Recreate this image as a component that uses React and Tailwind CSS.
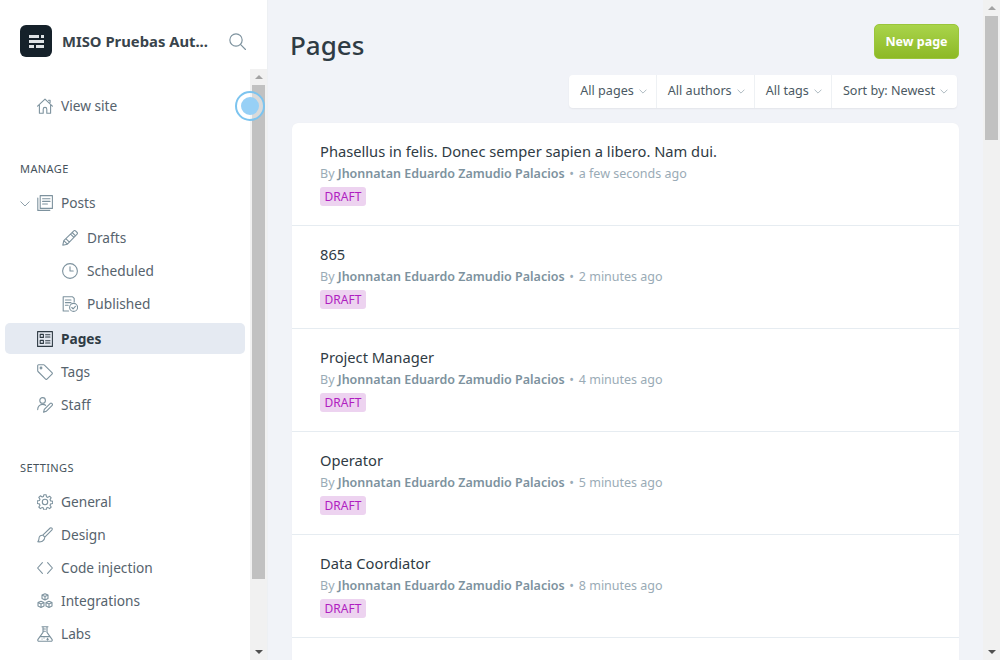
import React from 'react';

// shared props for the thin outline icons of the sidebar
const line = { fill: 'none', stroke: 'currentColor', strokeWidth: 1.1, strokeLinecap: 'round', strokeLinejoin: 'round' };

const Icon = ({ children, className = 'w-4 h-4' }) => (
  <svg viewBox="0 0 16 16" className={`${className} text-[#7d929e] shrink-0`} {...line}>
    {children}
  </svg>
);

const HomeIcon = () => (
  <Icon>
    <path d="M.6 8.2 8 1.2l7.4 7M2.4 7v8.2h3.8v-4a1.8 1.8 0 0 1 3.6 0v4h3.8V7M11.5 2.2h1.6v2.2" />
  </Icon>
);
const PostsIcon = () => (
  <Icon>
    <path d="M3.2.6h12.200v12.800H3.200zM.8 3v12.400h12M5.600 3.800h7.400M5.600 6.400h7.400M5.600 9h4.800" />
  </Icon>
);
const PencilIcon = () => (
  <Icon>
    <path d="M.8 15.200l1-4.600L11.800.9a1.200 1.200 0 0 1 1.700 0l1.600 1.600a1.200 1.200 0 0 1 0 1.700L5.400 14.200zM1.800 10.600l3.600 3.600M10.200 2.500l3.300 3.300M8.600 4.100l3.300 3.300M3.800 8.600l3.600 3.600" />
  </Icon>
);
const ClockIcon = () => (
  <Icon>
    <circle cx="8" cy="8" r="7.400" />
    <path d="M8 3.800V8h3.200" />
  </Icon>
);
const PublishedIcon = () => (
  <Icon>
    <path d="M6.600 15H1.200V.8h9.400l1.600 1.600v3.600M3.400 4h5.600M3.400 6.600h5.600M3.400 9.200h2.800" />
    <circle cx="11.600" cy="11.400" r="4" />
    <path d="m9.800 11.500 1.300 1.300 2.300-2.500" />
  </Icon>
);
const PagesIcon = () => (
  <svg viewBox="0 0 16 16" className="w-4 h-4 text-[#2f3b44] shrink-0" {...line}>
    <path d="M.6.6h14.800v14.800H.6zM3.200 3.400h3.200v3H3.200zM3.200 9.400h3.200v3H3.200zM8.600 3.800h4.400M8.600 6h4.400M8.600 9.800h4.400M8.600 12h4.400" />
  </svg>
);
const TagIcon = () => (
  <Icon>
    <path d="M.7 1.600v5.200a1 1 0 0 0 .3.700l7.600 7.600a1 1 0 0 0 1.400 0l5-5a1 1 0 0 0 0-1.400L7.400 1.100a1 1 0 0 0-.7-.3H1.500a.8.800 0 0 0-.8.800z" />
    <circle cx="4" cy="4" r=".9" />
  </Icon>
);
const StaffIcon = () => (
  <Icon>
    <circle cx="5.600" cy="3.400" r="2.800" />
    <path d="M.7 12.600c0-3 2-5.200 4.900-5.200 1.200 0 2.200.3 3 .9M6.600 15.200l.7-2.800 6-6a1 1 0 0 1 1.400 0l.5.5a1 1 0 0 1 0 1.400l-6 6z" />
  </Icon>
);
const GearIcon = () => (
  <Icon>
    <circle cx="8" cy="8" r="2.700" />
    <path d="M6.900.7h2.200l.4 2.100 1.300.6 1.800-1.200 1.600 1.600-1.200 1.800.6 1.300 2.100.4v2.200l-2.100.4-.6 1.300 1.200 1.800-1.600 1.600-1.800-1.200-1.300.6-.4 2.100H6.900l-.4-2.100-1.300-.6-1.800 1.200-1.600-1.600 1.200-1.800-.6-1.300-2.100-.4V6.900l2.100-.4.6-1.300-1.200-1.800 1.600-1.600 1.800 1.200 1.300-.6z" />
  </Icon>
);
const BrushIcon = () => (
  <Icon>
    <path d="M5.800 8.200 13.200 1a1.300 1.300 0 0 1 1.800 1.800L7.800 10.200zM5.800 8.200c-2.600-.2-3.800 1.400-3.800 3.200 0 1.300-.4 2.400-1.200 3.400 3 .4 6.800-.6 7-4.600" />
  </Icon>
);
const CodeIcon = () => (
  <Icon>
    <path d="M5.400 2.600.6 8l4.800 5.400M10.600 2.600 15.400 8l-4.800 5.400" />
  </Icon>
);
const IntegrationsIcon = () => (
  <Icon>
    <path d="M8 .7l3 1.400v3.400L8 6.900 5 5.500V2.100zM5 2.100l3 1.400 3-1.400M8 3.500v3.400" />
    <path d="M4 8.200l3 1.400V13l-3 1.500L1 13V9.600zM1 9.600 4 11l3-1.400M4 11v3.500" />
    <path d="M12 8.200l3 1.400V13l-3 1.500L9 13V9.600zM9 9.600l3 1.400 3-1.400M12 11v3.500" />
  </Icon>
);
const FlaskIcon = () => (
  <Icon>
    <path d="M5 .8h6M6 .8v5.600L1 13.400a1.200 1.200 0 0 0 1 1.900h12a1.200 1.200 0 0 0 1-1.900L10 6.400V.8M6 3h2.400M6 5.200h2.400M3 10.600h10M10.600 12.400v1.600M9.800 13.200h1.600M5 13h.1M7 12h.1" />
  </Icon>
);

const Chevron = () => (
  <svg viewBox="0 0 10 6" className="w-[8px] h-[5px] text-[#9aa9b3] shrink-0" fill="none" stroke="currentColor" strokeWidth="1">
    <path d="M.7.7 5 5 9.300.7" />
  </svg>
);

const NavItem = ({ icon, label, sub, active, className = '' }) => (
  <div
    className={`flex items-center h-[31px] rounded-[5px] mr-[5px] ml-[5px] ${sub ? 'pl-[57px]' : 'pl-[32px]'} ${active ? 'bg-[#e5eaf2] font-bold text-[#2f3b44]' : 'text-[#56636d]'} ${className}`}
  >
    {icon}
    <span className={`pt-[2px] ${sub ? 'ml-[9px]' : 'ml-[8px]'}`}>{label}</span>
  </div>
);

const Heading = ({ children, className = '' }) => (
  <div className={`pl-[20px] text-[11px] leading-[16px] tracking-[0.4px] text-[#45525b] ${className}`}>{children}</div>
);

// classic windows scrollbar, the thumb size and offset come in as classes
const Scrollbar = ({ thumbClass }) => (
  <div className="w-[17px] shrink-0 bg-[#f1f1f1] flex flex-col items-center">
    <div className="h-[16px] w-full flex items-center justify-center">
      <div className="w-0 h-0 border-x-[4px] border-x-transparent border-b-[4px] border-b-[#a3a3a3]" />
    </div>
    <div className={`w-[13px] bg-[#c1c1c1] ${thumbClass}`} />
    <div className="flex-1" />
    <div className="h-[17px] w-full flex items-center justify-center">
      <div className="w-0 h-0 border-x-[4px] border-x-transparent border-t-[4px] border-t-[#505050]" />
    </div>
  </div>
);

const Sidebar = () => (
  <aside className="w-[268px] h-full shrink-0 bg-white border-r border-[#edf0f3] flex flex-col text-[13.7px]">
    <header className="h-[69px] shrink-0 flex items-start pt-[25px] pl-[20px]">
      <div className="w-[32px] h-[32px] rounded-[6px] bg-[#15212a] flex flex-col items-center justify-center gap-[2px]">
        <div className="flex gap-[2px]">
          <div className="w-[10px] h-[3px] bg-[#dfe3e6]" />
          <div className="w-[3px] h-[3px] bg-[#dfe3e6]" />
        </div>
        <div className="w-[15px] h-[3px] bg-[#dfe3e6]" />
        <div className="flex gap-[2px]">
          <div className="w-[5px] h-[3px] bg-[#dfe3e6]" />
          <div className="w-[8px] h-[3px] bg-[#dfe3e6]" />
        </div>
      </div>
      <div className="ml-[10px] w-[150px] h-[32px] flex items-center text-[14.800px] font-bold text-[#39444c] whitespace-nowrap">
        MISO Pruebas Aut...
      </div>
      <svg viewBox="0 0 16 16" className="w-[17px] h-[17px] ml-[17px] mt-[8px] text-[#7d929e]" {...line}>
        <circle cx="6.600" cy="6.600" r="5.800" />
        <path d="m11 11 4.500 4.500" />
      </svg>
    </header>
    <div className="flex-1 min-h-0 flex relative">
      <nav className="flex-1 min-w-0 overflow-hidden">
        <NavItem icon={<HomeIcon />} label="View site" className="mt-[21px]" />
        <Heading className="mt-[40px]">MANAGE</Heading>
        <div className="relative mt-[10px]">
          <div className="absolute left-[20px] top-[14px]">
            <svg viewBox="0 0 10 6" className="w-[10px] h-[6px] text-[#8fa0aa]" fill="none" stroke="currentColor" strokeWidth="1">
              <path d="M.5.500 5 5 9.500.500" />
            </svg>
          </div>
          <NavItem icon={<PostsIcon />} label="Posts" />
        </div>
        <div className="pt-[3px]">
          <NavItem icon={<PencilIcon />} label="Drafts" sub className="h-[33px]" />
          <NavItem icon={<ClockIcon />} label="Scheduled" sub className="h-[33px]" />
          <NavItem icon={<PublishedIcon />} label="Published" sub className="h-[33px]" />
        </div>
        <NavItem icon={<PagesIcon />} label="Pages" active className="mt-[3px]" />
        <NavItem icon={<TagIcon />} label="Tags" className="mt-[2px]" />
        <NavItem icon={<StaffIcon />} label="Staff" className="mt-[2px]" />
        <Heading className="mt-[40px]">SETTINGS</Heading>
        <div className="mt-[10px] flex flex-col gap-[2px]">
          <NavItem icon={<GearIcon />} label="General" />
          <NavItem icon={<BrushIcon />} label="Design" />
          <NavItem icon={<CodeIcon />} label="Code injection" />
          <NavItem icon={<IntegrationsIcon />} label="Integrations" />
          <NavItem icon={<FlaskIcon />} label="Labs" />
        </div>
      </nav>
      <Scrollbar thumbClass="h-[494px]" />
      {/* the blue pulse dot that lies over the scrollbar */}
      <div className="absolute left-[235px] top-[22px] w-[30px] h-[30px] rounded-full border-2 border-[#7cc4ef] flex items-center justify-center bg-[#ffffff66]">
        <div className="w-[18px] h-[18px] rounded-full bg-[#97d0f6]" />
      </div>
    </div>
  </aside>
);

const filters = ['All pages', 'All authors', 'All tags', 'Sort by: Newest'];

const FilterBar = () => (
  <div className="flex h-[33px] bg-white rounded-[4px] shadow-[0_1px_2px_rgba(0,0,0,0.06)] text-[12.600px] text-[#4b5963] mr-[2px]">
    {filters.map((f, i) => (
      <div key={f} className={`flex items-center gap-[5px] pl-[11px] pr-[9px] whitespace-nowrap ${i > 0 ? 'border-l border-[#eef1f4]' : ''}`}>
        {f}
        <Chevron />
      </div>
    ))}
  </div>
);

const pages = [
  { title: 'Phasellus in felis. Donec semper sapien a libero. Nam dui.', when: 'a few seconds ago' },
  { title: '865', when: '2 minutes ago' },
  { title: 'Project Manager', when: '4 minutes ago' },
  { title: 'Operator', when: '5 minutes ago' },
  { title: 'Data Coordiator', when: '8 minutes ago' },
];

const PageRow = ({ page }) => (
  <div className="h-[103px] shrink-0 border-b border-[#e6ecf1] pl-[28px] pt-[18px]">
    <div className="text-[14.700px] leading-[21px] text-[#2f3b44]">{page.title}</div>
    <div className="text-[12.500px] leading-[18px] mt-[3px] text-[#9aabb6] whitespace-nowrap">
      By <span className="font-semibold text-[#7d929e]">Jhonnatan Eduardo Zamudio Palacios</span>
      <span className="mx-[1.500px]"> • </span>
      {page.when}
    </div>
    <div className="mt-[4px] w-[46px] h-[19px] rounded-[3px] bg-[#edd3f0] flex items-center justify-center text-[12px] text-[#b01ec0]">
      DRAFT
    </div>
  </div>
);

const Main = () => (
  <main className="flex-1 min-w-0 h-full bg-[#f1f3f8] flex">
    <div className="flex-1 min-w-0 overflow-hidden pl-[22px] pr-[24px]">
      <div className="flex justify-between items-start pt-[24px]">
        <h1 className="text-[26px] leading-[42px] font-medium text-[#2f3b44]">Pages</h1>
        <button className="w-[85px] h-[35px] pt-[2px] rounded-[5px] bg-gradient-to-b from-[#a9d44a] to-[#8db925] border border-[#9ac53a] text-white text-[12.500px] font-bold">
          New page
        </button>
      </div>
      <div className="flex justify-end mt-[9px]">
        <FilterBar />
      </div>
      <div className="ml-[2px] mt-[15px] bg-white rounded-t-[6px] h-[600px] flex flex-col shadow-[0_0_1px_rgba(0,0,0,0.05)]">
        {pages.map((p) => (
          <PageRow key={p.title} page={p} />
        ))}
      </div>
    </div>
    <Scrollbar thumbClass="h-[124px]" />
  </main>
);

export default function App() {
  return (
    <div className="w-[1000px] h-[660px] flex overflow-hidden font-['Noto_Sans','Open_Sans',sans-serif]">
      <Sidebar />
      <Main />
    </div>
  );
}
